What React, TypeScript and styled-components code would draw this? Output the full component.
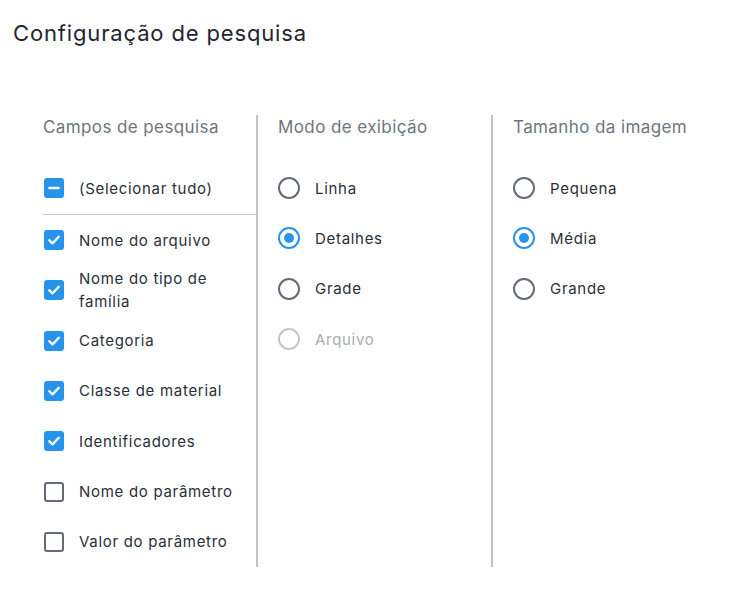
import React from "react";
import styled, { createGlobalStyle } from "styled-components";

const Global = createGlobalStyle`
  html, body { margin: 0; padding: 0; background: #ffffff; }
  body { font-family: Inter, "Noto Sans", sans-serif; color: #2a2f38; }
`;

const Page = styled.div`
  width: 738px;
  height: 612px;
  box-sizing: border-box;
  padding: 19px 0 0 13px;
`;

const Title = styled.h1`
  margin: 0;
  font-size: 22px;
  font-weight: 400;
  line-height: 28px;
  color: #1f2533;
  letter-spacing: 0.85px;
`;

const Columns = styled.div`
  display: flex;
  margin-top: 68px;
  margin-left: 10px;
`;

const Column = styled.div<{ $last?: boolean }>`
  width: 235px;
  box-sizing: border-box;
  padding-left: 20px;
  border-right: ${(p) => (p.$last ? "none" : "2px solid #bfc4ca")};
  height: 452px;
  display: flex;
  flex-direction: column;
`;

const Header = styled.div`
  font-size: 17px;
  line-height: 24px;
  color: #6e7580;
  letter-spacing: 0.4px;
  margin-bottom: 24px;
`;

const Row = styled.label<{ $disabled?: boolean }>`
  display: flex;
  align-items: center;
  gap: 15px;
  min-height: 50.3px;
  font-size: 15px;
  line-height: 23px;
  letter-spacing: 0.7px;
  color: ${(p) => (p.$disabled ? "#a9aeb5" : "#2a2f38")};
  padding-right: 12px;
`;

const Divider = styled.div`
  height: 1px;
  background: #c5c9ce;
  margin: 1px 0 0 0;
`;

const Box = styled.span<{ $on?: boolean }>`
  flex: none;
  width: 20px;
  height: 20px;
  box-sizing: border-box;
  border-radius: 3px;
  margin-left: 1px;
  display: flex;
  align-items: center;
  justify-content: center;
  background: ${(p) => (p.$on ? "#2693ec" : "#ffffff")};
  border: ${(p) => (p.$on ? "none" : "2px solid #646b76")};
`;

const Dot = styled.span<{ $on?: boolean; $disabled?: boolean }>`
  flex: none;
  width: 22px;
  height: 22px;
  box-sizing: border-box;
  border-radius: 50%;
  border: 2px solid
    ${(p) => (p.$on ? "#2693ec" : p.$disabled ? "#c3c6ca" : "#646b76")};
  display: flex;
  align-items: center;
  justify-content: center;
  &::after {
    content: "";
    width: 10px;
    height: 10px;
    border-radius: 50%;
    background: ${(p) => (p.$on ? "#2693ec" : "transparent")};
  }
`;

const Check = () => (
  <svg width="14" height="14" viewBox="0 0 14 14" fill="none">
    <path d="M2.2 7.2 L5.5 10.4 L11.8 3.8" stroke="#fff" strokeWidth="2.3" strokeLinecap="round" strokeLinejoin="round" />
  </svg>
);

const Dash = () => (
  <svg width="14" height="14" viewBox="0 0 14 14" fill="none">
    <path d="M2.5 7 H11.5" stroke="#fff" strokeWidth="2.6" strokeLinecap="round" />
  </svg>
);

const fields: [string, boolean][] = [
  ["Nome do arquivo", true],
  ["Nome do tipo de família", true],
  ["Categoria", true],
  ["Classe de material", true],
  ["Identificadores", true],
  ["Nome do parâmetro", false],
  ["Valor do parâmetro", false],
];

const modes: [string, boolean, boolean][] = [
  ["Linha", false, false],
  ["Detalhes", true, false],
  ["Grade", false, false],
  ["Arquivo", false, true],
];

const sizes: [string, boolean][] = [
  ["Pequena", false],
  ["Média", true],
  ["Grande", false],
];

export default function App() {
  return (
    <Page>
      <Global />
      <Title>Configuração de pesquisa</Title>
      <Columns>
        <Column>
          <Header>Campos de pesquisa</Header>
          <Row>
            <Box $on>
              <Dash />
            </Box>
            (Selecionar tudo)
          </Row>
          <Divider />
          {fields.map(([t, on]) => (
            <Row key={t}>
              <Box $on={on}>{on && <Check />}</Box>
              <span>{t}</span>
            </Row>
          ))}
        </Column>
        <Column>
          <Header>Modo de exibição</Header>
          {modes.map(([t, on, dis]) => (
            <Row key={t} $disabled={dis}>
              <Dot $on={on} $disabled={dis} />
              {t}
            </Row>
          ))}
        </Column>
        <Column $last>
          <Header>Tamanho da imagem</Header>
          {sizes.map(([t, on]) => (
            <Row key={t}>
              <Dot $on={on} />
              {t}
            </Row>
          ))}
        </Column>
      </Columns>
    </Page>
  );
}
